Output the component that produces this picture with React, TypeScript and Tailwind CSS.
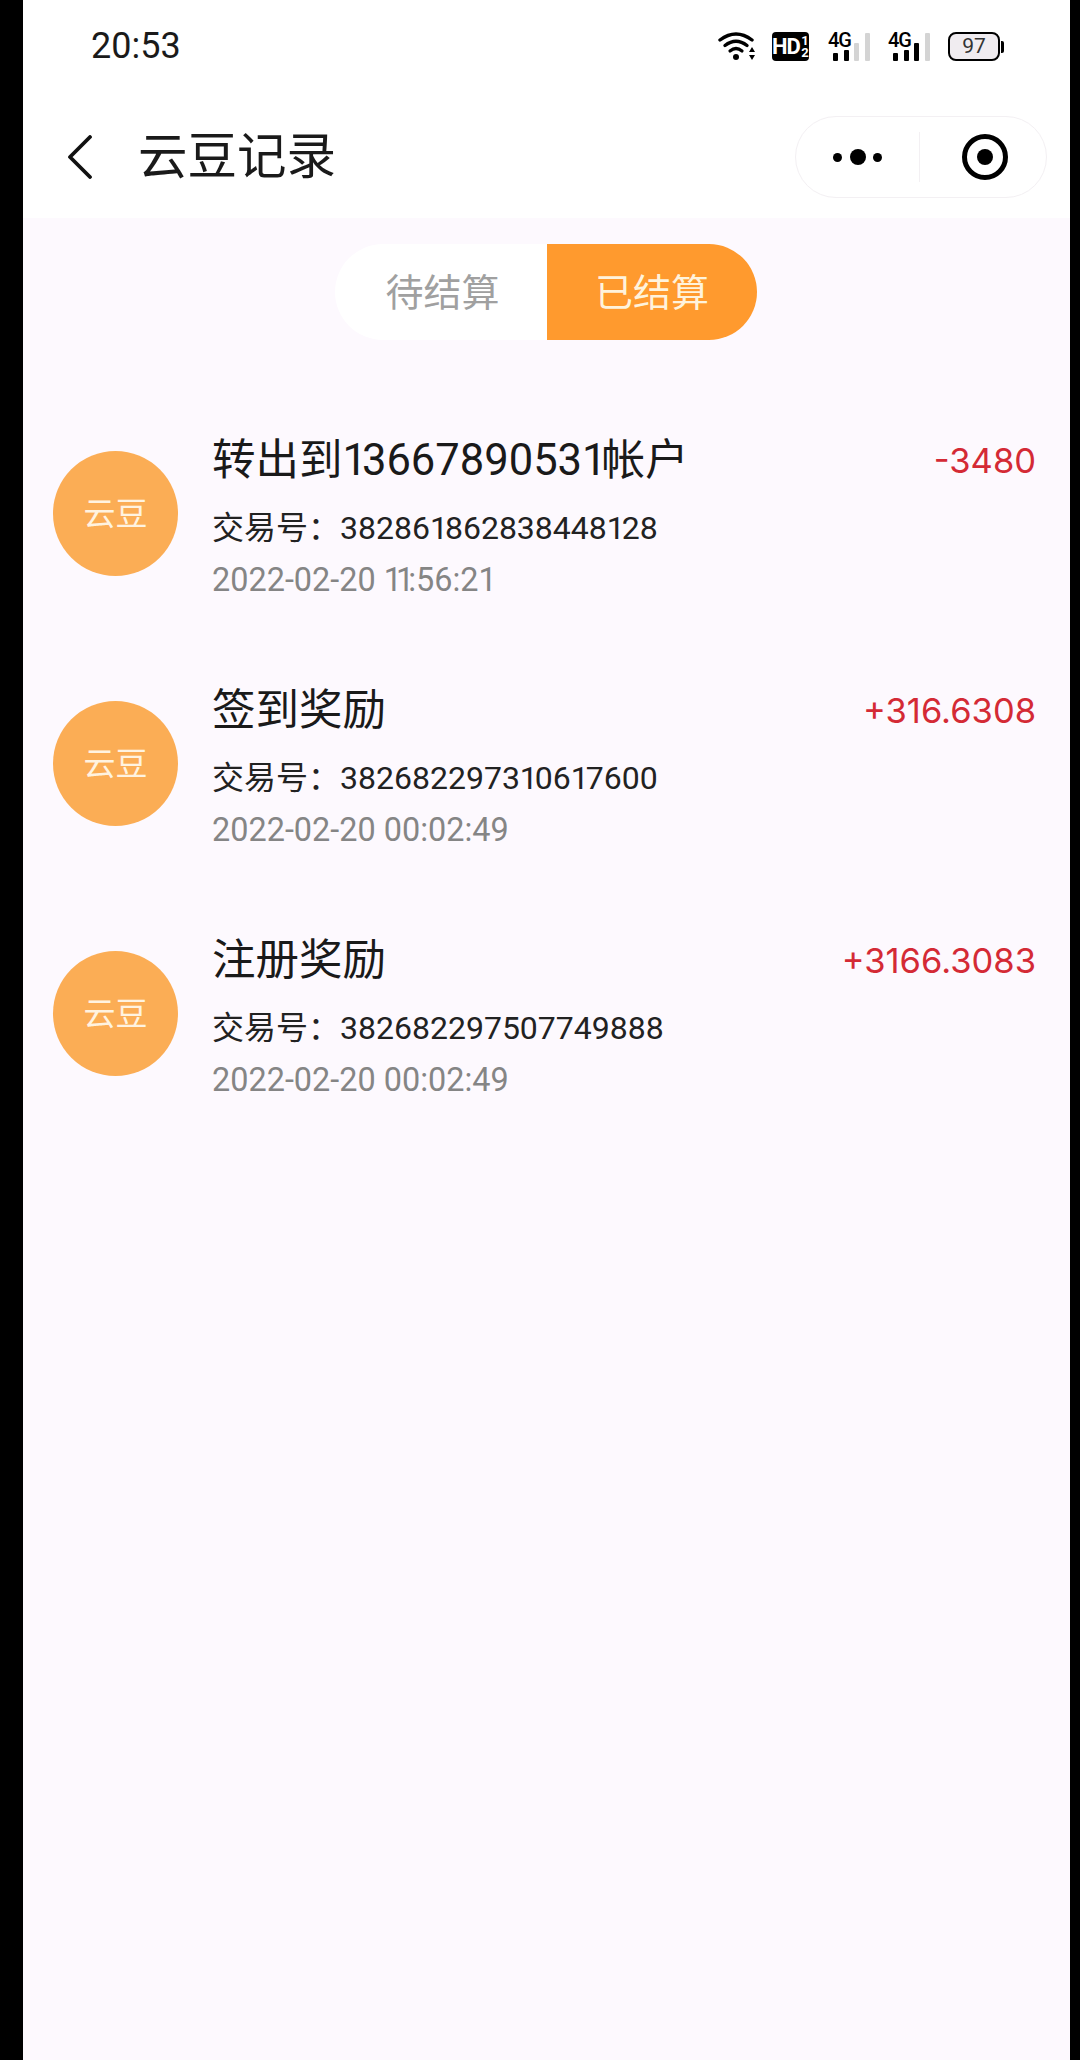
import React from "react";

const records = [
  { title: "转出到13667890531帐户", no: "382861862838448128", time: "2022-02-20 11:56:21", amount: "-3480" },
  { title: "签到奖励", no: "382682297310617600", time: "2022-02-20 00:02:49", amount: "+316.6308" },
  { title: "注册奖励", no: "382682297507749888", time: "2022-02-20 00:02:49", amount: "+3166.3083" },
];

// the digit 1 is narrower than the others in the picture's font
const NarrowOnes = ({ text, className }: { text: string; className: string }) => (
  <>
    {text.split("").map((c, i) =>
      c === "1" ? (
        <span key={i} className={className}>
          1
        </span>
      ) : (
        c
      )
    )}
  </>
);

const Signal = ({ level }: { level: number }) => {
  const heights = [8, 11, 18, 28];
  return (
    <div className="relative h-[29px] w-[44px]">
      <span className="absolute left-0 top-0 text-[20px] leading-[16px] font-medium tracking-[-1px] text-black font-['Roboto',sans-serif]">
        4G
      </span>
      <div className="absolute bottom-0 left-[5px] flex items-end gap-[5.5px]">
        {heights.map((h, i) => (
          <span
            key={i}
            className={i < level ? "w-[5px] rounded-[1px] bg-black" : "w-[5px] rounded-[1px] bg-[#d4d4d4]"}
            style={{ height: h }}
          />
        ))}
      </div>
    </div>
  );
};

const StatusBar = () => (
  <div className="flex h-[96px] shrink-0 items-start justify-between pl-[68px] pr-[66px] pt-[31px]">
    <div className="text-[36px] leading-[31px] text-[#1a1a1a] font-['Roboto',sans-serif]">20:53</div>
    <div className="flex items-center">
      <svg width="39" height="31" viewBox="0 0 39 31" fill="none" className="mr-[15px]">
        <path d="M2 9Q18 -3 34 9" stroke="#000" strokeWidth="3.4" strokeLinecap="round" />
        <path d="M7 14.5Q18 6 29 14.5" stroke="#000" strokeWidth="3.4" strokeLinecap="round" />
        <path d="M12 20Q18 15 24 20" stroke="#000" strokeWidth="3.2" strokeLinecap="round" />
        <circle cx="18" cy="26" r="3" fill="#000" />
        <path d="M31 21L34 16L37 21ZM31 24L34 29L37 24Z" fill="#000" />
      </svg>
      <div className="mr-[19px] flex h-[29px] w-[37px] items-center justify-center rounded-[4px] bg-black text-[22px] font-bold leading-none tracking-[-1px] text-white font-['Roboto',sans-serif]">
        HD<span className="ml-[1px] w-[8px] text-center text-[13px] leading-[12px] tracking-normal">1<br />2</span>
      </div>
      <div className="mr-[16px]"><Signal level={2} /></div>
      <div className="mr-[16px]"><Signal level={3} /></div>
      <div className="flex items-center">
        <div className="flex h-[29px] w-[52px] items-center justify-center rounded-[8px] border-[2.5px] border-black bg-[#f0ecf0] text-[21px] leading-none text-[#333] font-['Roboto',sans-serif]">
          97
        </div>
        <span className="ml-[1px] h-[12px] w-[3px] rounded-r-[2px] bg-black" />
      </div>
    </div>
  </div>
);

const NavBar = () => (
  <div className="flex h-[122px] shrink-0 items-center pl-[44px] pr-[23px]">
    <svg width="26" height="44" viewBox="0 0 26 44" fill="none">
      <path d="M23 2L3 22L23 42" stroke="#111" strokeWidth="3.8" strokeLinecap="round" strokeLinejoin="round" />
    </svg>
    <h1 className="ml-[45px] text-[49.5px] leading-[56px] font-normal text-[#1a1a1a]">云豆记录</h1>
    <div className="ml-auto flex h-[82px] w-[252px] items-center rounded-full border border-[#f3f0f3]">
      <div className="flex w-[123px] items-center justify-center gap-[7.5px]">
        <span className="h-[9px] w-[9px] rounded-full bg-black" />
        <span className="h-[16px] w-[16px] rounded-full bg-black" />
        <span className="h-[9px] w-[9px] rounded-full bg-black" />
      </div>
      <span className="h-[50px] w-px bg-[#f3f0f3]" />
      <div className="flex flex-1 items-center justify-center pl-[4px]">
        <span className="flex h-[46px] w-[46px] items-center justify-center rounded-full border-[5px] border-black">
          <span className="h-[16px] w-[16px] rounded-full bg-black" />
        </span>
      </div>
    </div>
  </div>
);

const Tabs = () => (
  <div className="flex justify-center pr-[1px] pt-[26px]">
    <div className="flex h-[96px] w-[422px] text-[38px] leading-none">
      <div className="flex w-[212px] items-center justify-center rounded-l-full bg-white pl-[3px] pt-[2px] text-[#a0a0a0]">待结算</div>
      <div className="flex flex-1 items-center justify-center rounded-r-full bg-[#ff9a2e] pt-[2px] text-[#fff3dc]">已结算</div>
    </div>
  </div>
);

const RecordRow = ({ title, no, time, amount }: (typeof records)[number]) => (
  <div className="flex h-[250px] pl-[30px] pr-[34px]">
    <div className="mt-[39px] flex h-[125px] w-[125px] shrink-0 items-center justify-center rounded-full bg-[#fbad55] text-[32px] leading-none text-[#fff3e0]">
      云豆
    </div>
    <div className="ml-[34px] flex-1 pt-[23px]">
      <div className="flex items-center justify-between">
        <div className="text-[43.5px] leading-[52px] text-[#1a1a1a]">
          <NarrowOnes text={title} className="tracking-[-5px]" />
        </div>
        <div className="text-[34.5px] leading-[52px] text-[#d42a35] font-['Inter',sans-serif]">{amount}</div>
      </div>
      <div className="mt-[21px] text-[32px] leading-[40px] text-[#222]">
        交易号：<NarrowOnes text={no} className="tracking-[-3px]" />
      </div>
      <div className="mt-[12px] text-[32.4px] leading-[40px] text-[#858585]">
        <NarrowOnes text={time} className="tracking-[-6px]" />
      </div>
    </div>
  </div>
);

export default function App() {
  return (
    <div className="flex h-[2060px] w-[1080px] overflow-hidden bg-black pl-[23px] pr-[10px] font-['Roboto','Noto_Sans_CJK_SC',sans-serif]">
      <div className="flex flex-1 flex-col bg-[#fdf9fe]">
        <div className="bg-white">
          <StatusBar />
          <NavBar />
        </div>
        <Tabs />
        <div className="pt-[72px]">
          {records.map((r) => (
            <RecordRow key={r.no} {...r} />
          ))}
        </div>
      </div>
    </div>
  );
}
